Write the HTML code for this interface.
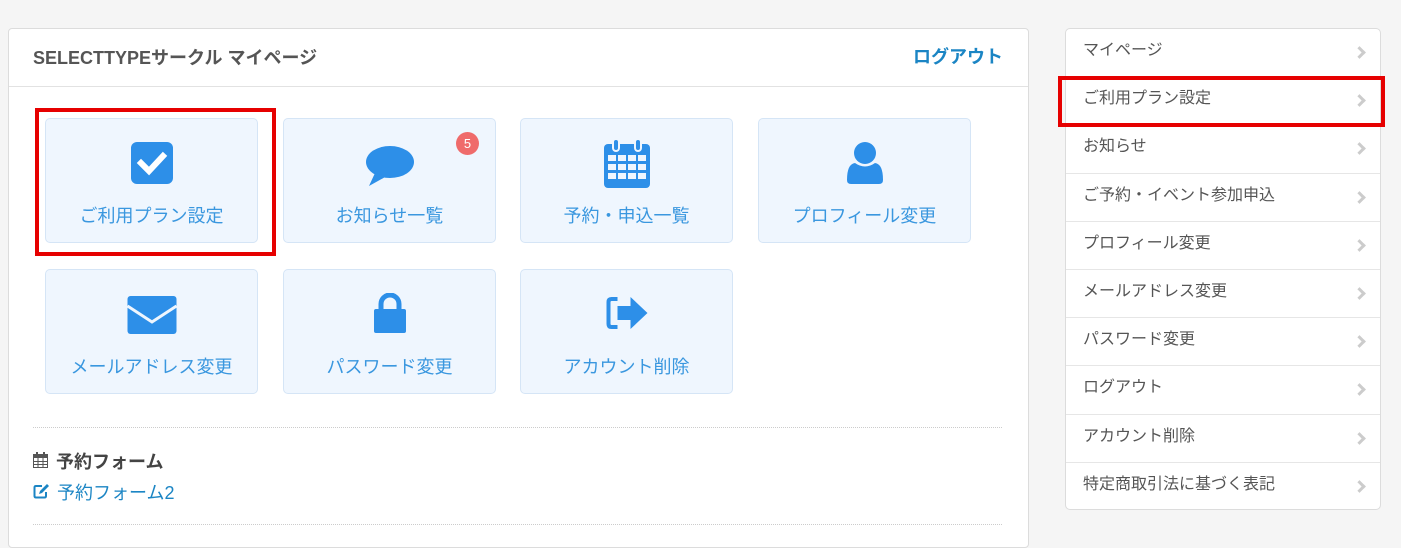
<!DOCTYPE html>
<html><head><meta charset="utf-8"><style>
*{box-sizing:border-box;margin:0;padding:0}
body{width:1401px;height:526px;background:#f5f5f5;font-family:"Liberation Sans","Noto Sans CJK JP",sans-serif;position:relative;overflow:hidden}
.main{position:absolute;left:8px;top:28px;width:1021px;height:520px;background:#fff;border:1px solid #dcdcdc;border-radius:4px}
.hd{position:absolute;left:0;top:0;width:100%;height:58px;border-bottom:1px solid #e2e2e2}
.title{position:absolute;left:24px;top:15px;font-size:18px;font-weight:bold;color:#555}
.logout{position:absolute;right:25px;top:14px;font-size:18px;font-weight:bold;color:#1b85c4}
.tile{position:absolute;width:213px;height:125px;background:#eff6fe;border:1px solid #d5e5f6;border-radius:5px;text-align:center;color:#3a97df;font-size:18px}
.tile svg{position:absolute;left:50%;transform:translateX(-50%)}
.tile .lb{position:absolute;left:0;right:0;top:83px}
.badge{position:absolute;left:456px;top:132px;width:23px;height:23px;border-radius:50%;background:#ef6b6b;color:#fff;font-size:13px;text-align:center;line-height:23px}
.red{position:absolute;border:4px solid #e60000}
.dot{position:absolute;left:33px;width:969px;border-top:1px dotted #ccc}
.side{position:absolute;left:1065px;top:28px;width:316px;height:482px;background:#fff;border:1px solid #dcdcdc;border-radius:5px}
.it{height:48.2px;border-bottom:1px solid #e6e6e6;position:relative;font-size:16px;color:#555;padding-left:17px;line-height:44px}
.it:last-child{border-bottom:none}
.it:after{content:"";position:absolute;right:16px;top:19px;width:6px;height:6px;border-right:3px solid #ccc;border-top:3px solid #ccc;transform:rotate(45deg)}
</style></head><body>
<div class="main">
<div class="hd"><div class="title">SELECTTYPEサークル マイページ</div><div class="logout">ログアウト</div></div>
</div>
<div class="tile" style="left:45px;top:118px"><svg style="top:23px" width="42" height="42" viewBox="0 0 42 42"><rect width="42" height="42" rx="6" fill="#2d8fe8"/><path d="M10 21l8 8 14-15" stroke="#fff" stroke-width="6" fill="none" stroke-linecap="square"/></svg><div class="lb">ご利用プラン設定</div></div>
<div class="tile" style="left:283px;top:118px"><svg style="top:26px" width="50" height="42" viewBox="0 0 50 42"><ellipse cx="25" cy="17" rx="24" ry="16" fill="#2d8fe8"/><path d="M10 28 L4 41 L22 31Z" fill="#2d8fe8"/></svg><div class="lb">お知らせ一覧</div></div>
<div class="badge">5</div>
<div class="tile" style="left:520px;top:118px"><svg style="top:20px" width="46" height="49" viewBox="0 0 46 49"><rect x="0" y="5" width="46" height="44" rx="4" fill="#2d8fe8"/><rect x="9" y="0" width="6" height="12" rx="3" fill="#2d8fe8" stroke="#eff6fe" stroke-width="2"/><rect x="31" y="0" width="6" height="12" rx="3" fill="#2d8fe8" stroke="#eff6fe" stroke-width="2"/><g fill="#eff6fe"><rect x="4" y="16" width="8" height="6"/><rect x="14" y="16" width="8" height="6"/><rect x="24" y="16" width="8" height="6"/><rect x="34" y="16" width="8" height="6"/><rect x="4" y="25" width="8" height="6"/><rect x="14" y="25" width="8" height="6"/><rect x="24" y="25" width="8" height="6"/><rect x="34" y="25" width="8" height="6"/><rect x="4" y="34" width="8" height="6"/><rect x="14" y="34" width="8" height="6"/><rect x="24" y="34" width="8" height="6"/><rect x="34" y="34" width="8" height="6"/></g></svg><div class="lb">予約・申込一覧</div></div>
<div class="tile" style="left:758px;top:118px"><svg style="top:23px" width="36" height="42" viewBox="0 0 36 42"><circle cx="18" cy="11" r="11" fill="#2d8fe8"/><path d="M0 38 Q0 22 8 21 Q18 28 28 21 Q36 22 36 38 Q36 42 32 42 H4 Q0 42 0 38Z" fill="#2d8fe8"/></svg><div class="lb">プロフィール変更</div></div>
<div class="tile" style="left:45px;top:269px"><svg style="top:26px" width="49" height="38" viewBox="0 0 49 38"><rect width="49" height="38" rx="3" fill="#2d8fe8"/><path d="M0 10 L24.5 26 L49 10" stroke="#eff6fe" stroke-width="3" fill="none"/></svg><div class="lb">メールアドレス変更</div></div>
<div class="tile" style="left:283px;top:269px"><svg style="top:23px" width="32" height="40" viewBox="0 0 32 40"><path d="M7 17 V11 A9 9 0 0 1 25 11 V17" stroke="#2d8fe8" stroke-width="5" fill="none"/><rect x="0" y="16" width="32" height="24" rx="2" fill="#2d8fe8"/></svg><div class="lb">パスワード変更</div></div>
<div class="tile" style="left:520px;top:269px"><svg style="top:26px" width="43" height="34" viewBox="0 0 43 34"><path d="M12 3 H6 Q3 3 3 6 V28 Q3 31 6 31 H12" stroke="#2d8fe8" stroke-width="4" fill="none"/><path d="M12 10 H25 V1 L42 17 L25 33 V24 H12Z" fill="#2d8fe8"/></svg><div class="lb">アカウント削除</div></div>
<div class="red" style="left:35px;top:108px;width:241px;height:148px"></div>
<div class="dot" style="top:427px"></div>
<svg style="position:absolute;left:33px;top:452px" width="15" height="16" viewBox="0 0 15 16"><rect x="0.5" y="2.5" width="14" height="13" fill="none" stroke="#555"/><rect x="0" y="2" width="15" height="4" fill="#555"/><path d="M5 6v10M10 6v10M0 9.5h15M0 12.5h15" stroke="#555"/><rect x="3" y="0" width="2" height="3" fill="#555"/><rect x="10" y="0" width="2" height="3" fill="#555"/></svg>
<div style="position:absolute;left:56px;top:448px;font-size:18px;font-weight:bold;color:#444">予約フォーム</div>
<svg style="position:absolute;left:33px;top:483px" width="17" height="16" viewBox="0 0 17 16"><path d="M9 3H3Q1.5 3 1.5 4.5V13Q1.5 14.5 3 14.5H11.5Q13 14.5 13 13V9" stroke="#1b85c4" stroke-width="2" fill="none"/><path d="M6 11L7 8 14 1 16 3 9 10Z" fill="#1b85c4"/></svg>
<div style="position:absolute;left:57px;top:479px;font-size:18px;color:#1b85c4">予約フォーム2</div>
<div class="dot" style="top:524px"></div>
<div class="side">
<div class="it">マイページ</div><div class="it">ご利用プラン設定</div><div class="it">お知らせ</div><div class="it">ご予約・イベント参加申込</div><div class="it">プロフィール変更</div><div class="it">メールアドレス変更</div><div class="it">パスワード変更</div><div class="it">ログアウト</div><div class="it">アカウント削除</div><div class="it">特定商取引法に基づく表記</div>
</div>
<div class="red" style="left:1058px;top:76px;width:327px;height:51px"></div>
</body></html>
